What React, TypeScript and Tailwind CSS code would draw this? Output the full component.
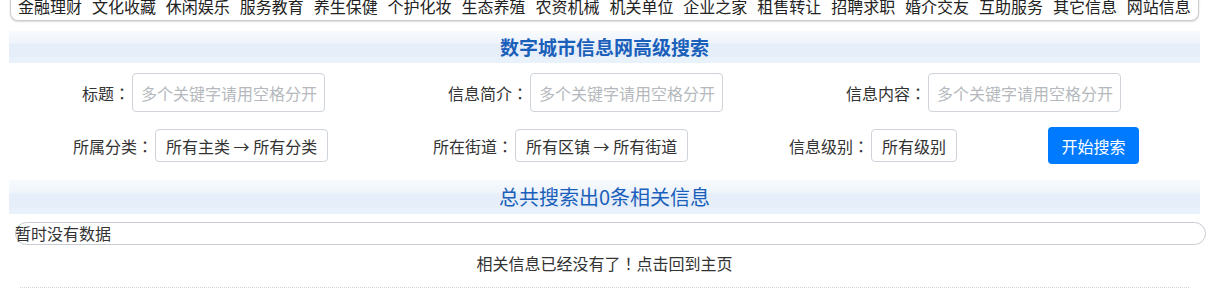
import React from 'react';

const navItems = [
  '金融理财', '文化收藏', '休闲娱乐', '服务教育', '养生保健', '个护化妆', '生态养殖', '农资机械',
  '机关单位', '企业之家', '租售转让', '招聘求职', '婚介交友', '互助服务', '其它信息', '网站信息',
];

const font = { fontFamily: '"Microsoft YaHei", "Noto Sans CJK SC", "Noto Sans", sans-serif' };

// full-width punctuation centred in its box, like YaHei draws it
const Punct = ({ c }: { c: string }) => (
  <span className="[font-family:'Noto_Sans_CJK_JP',sans-serif]">{c}</span>
);

const Bar = ({ children }: { children: React.ReactNode }) => (
  <div className="mx-[9px] flex items-center justify-center bg-[linear-gradient(to_bottom,#f8fbfe_0%,#eef4fb_38%,#e5eef9_42%,#e6eff9_80%,#e9f1fb_82%,#e9f1fb_100%)]">
    {children}
  </div>
);

const TextField = ({ label }: { label: string }) => (
  <div className="flex w-[398px] items-center justify-end pr-[73px]">
    <span className="text-[16px] text-[#333]">{label}<Punct c="：" /></span>
    <input
      className="ml-[2px] h-[39px] w-[193px] rounded-[4px] border border-[#ced4da] bg-white pl-[8px] text-[16px] text-[#333] placeholder:text-[#b5b9bd] outline-none"
      placeholder="多个关键字请用空格分开"
    />
  </div>
);

const SelectBox = ({ label, value, w }: { label: string; value: string; w: string }) => (
  <div className={`flex items-center ${w}`}>
    <span className="text-[16px] text-[#333]">{label}<Punct c="：" /></span>
    <div className="ml-[2px] flex h-[33px] items-center whitespace-pre rounded-[4px] border border-[#ced4da] bg-white px-[10px] text-[16px] text-[#333]">
      {value}
    </div>
  </div>
);

export default function App() {
  return (
    <div className="w-[1209px] h-[293px] overflow-hidden bg-white" style={font}>
      {/* top category nav, scrolled so only the bottom edge shows */}
      <div className="mx-[10px] -mt-[9px] flex h-[30px] items-center justify-between rounded-b-[8px] border border-t-0 border-[#c9cdd2] bg-white px-[7px] shadow-[0_1px_2px_rgba(0,0,0,0.15)]">
        {navItems.map((n) => (
          <span key={n} className="text-[16px] leading-[24px] text-[#222]">{n}</span>
        ))}
      </div>

      <div className="mt-[10px]">
        <Bar>
          <div className="h-[32px] text-[19px] font-bold leading-[32px] text-[#1a5fba]">数字城市信息网高级搜索</div>
        </Bar>
      </div>

      <div className="mt-[10px] flex">
        <TextField label="标题" />
        <TextField label="信息简介" />
        <TextField label="信息内容" />
      </div>

      <div className="mt-[15px] flex items-center pl-[73px]">
        <SelectBox label="所属分类" value="所有主类 → 所有分类" w="w-[360px]" />
        <SelectBox label="所在街道" value="所有区镇 → 所有街道" w="w-[356px]" />
        <SelectBox label="信息级别" value="所有级别" w="w-[259px]" />
        <button className="h-[37px] w-[91px] rounded-[4px] bg-[#007bff] text-[16px] text-white">开始搜索</button>
      </div>

      <div className="mt-[16px]">
        <Bar>
          <div className="h-[34px] text-[20px] leading-[34px] text-[#1a5fba]">总共搜索出0条相关信息</div>
        </Bar>
      </div>

      <div className="ml-[15px] mr-[3px] mt-[8px] h-[23px] rounded-full border border-[#c6ccd2] text-[16px] leading-[21px] text-[#333]">
        <span className="-ml-[1px]">暂时没有数据</span>
      </div>

      <div className="mt-[6px] text-center text-[16px] leading-[24px] text-[#333]">
        相关信息已经没有了<Punct c="！" />点击回到主页
      </div>

      <div className="mx-[20px] mt-[12px] border-t border-dotted border-[#d4d4d4]" />
    </div>
  );
}
